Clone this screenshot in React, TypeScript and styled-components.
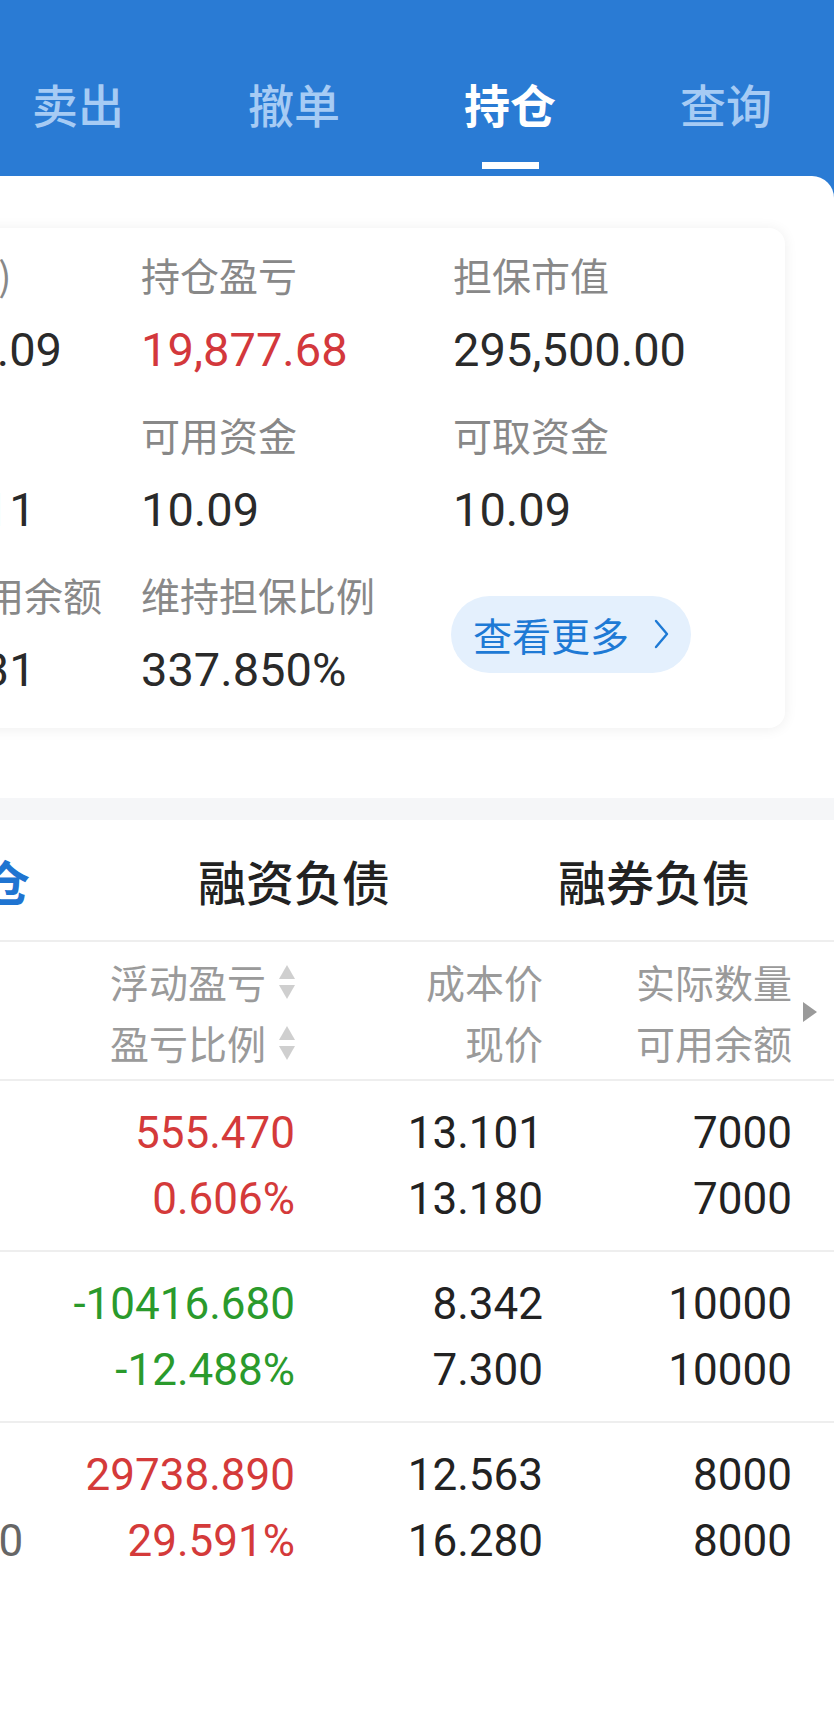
import styled, { createGlobalStyle } from "styled-components";

const GlobalStyle = createGlobalStyle`
  html, body {
    margin: 0;
    padding: 0;
    background: #ffffff;
  }
  body {
    font-family: Roboto, "Noto Sans CJK SC", sans-serif;
  }
`;

const CJK = `"Noto Sans CJK SC", "Noto Sans", sans-serif`;
const NUM = `Roboto, "Noto Sans CJK SC", sans-serif`;

const navTabs = ["买入", "卖出", "撤单", "持仓", "查询"];

const stats = [
  { label: "总资产(元)", value: "295,510.09" },
  { label: "持仓盈亏", value: "19,877.68", tone: "up" },
  { label: "担保市值", value: "295,500.00" },
  { label: "总负债", value: "87,466.11" },
  { label: "可用资金", value: "10.09" },
  { label: "可取资金", value: "10.09" },
  { label: "信用额可用余额", value: "58,033.31" },
  { label: "维持担保比例", value: "337.850%" },
];

const subTabs = ["担保持仓", "融资负债", "融券负债"];

type Tone = "up" | "down" | "flat";

const rows: {
  name: string;
  value: string;
  pl: string;
  ratio: string;
  cost: string;
  price: string;
  qty: string;
  avail: string;
  tone: Tone;
}[] = [
  { name: "招商银行", value: "92260.000", pl: "555.470", ratio: "0.606%", cost: "13.101", price: "13.180", qty: "7000", avail: "7000", tone: "up" },
  { name: "华夏银行", value: "73000.000", pl: "-10416.680", ratio: "-12.488%", cost: "8.342", price: "7.300", qty: "10000", avail: "10000", tone: "down" },
  { name: "中国平安", value: "130240.000", pl: "29738.890", ratio: "29.591%", cost: "12.563", price: "16.280", qty: "8000", avail: "8000", tone: "up" },
];

const toneColor = (t?: string) => (t === "up" ? "#d43a3a" : t === "down" ? "#2a9a2c" : "#222222");

const SortIcon = () => (
  <svg width="16" height="34" viewBox="0 0 16 34">
    <polygon points="8,0 16,14 0,14" fill="#cfcfcf" />
    <polygon points="0,20 16,20 8,34" fill="#cfcfcf" />
  </svg>
);

export default function App() {
  return (
    <>
      <GlobalStyle />
      <Viewport>
        <Screen>
          <Header>
            {navTabs.map((t) => (
              <NavTab key={t} $active={t === "持仓"}>
                {t}
              </NavTab>
            ))}
          </Header>

          <Panel>
            <Card>
              {stats.map((s) => (
                <Stat key={s.label}>
                  <StatLabel>{s.label}</StatLabel>
                  <StatValue $tone={s.tone}>{s.value}</StatValue>
                </Stat>
              ))}
              <MoreCell>
                <MoreButton>
                  查看更多
                  <svg width="15" height="30" viewBox="0 0 15 30">
                    <path d="M2 2 L13 15 L2 28" fill="none" stroke="#1e7ad5" strokeWidth="2.4" strokeLinecap="round" strokeLinejoin="round" />
                  </svg>
                </MoreButton>
              </MoreCell>
            </Card>

            <Band />

            <SubTabBar>
              {subTabs.map((t, i) => (
                <SubTab key={t} $active={i === 0}>
                  {t}
                </SubTab>
              ))}
            </SubTabBar>

            <TableHead>
              <NameCol />
              <HeadCell>
                <HeadLine>
                  浮动盈亏
                  <SortIcon />
                </HeadLine>
                <HeadLine>
                  盈亏比例
                  <SortIcon />
                </HeadLine>
              </HeadCell>
              <HeadCell>
                <HeadLine>成本价</HeadLine>
                <HeadLine>现价</HeadLine>
              </HeadCell>
              <HeadCell>
                <HeadLine>实际数量</HeadLine>
                <HeadLine>可用余额</HeadLine>
              </HeadCell>
              <MoreCol>
                <svg width="14" height="20" viewBox="0 0 14 20">
                  <polygon points="0,0 14,10 0,20" fill="#9a9a9a" />
                </svg>
              </MoreCol>
            </TableHead>

            {rows.map((r) => (
              <Row key={r.name}>
                <NameCol>
                  <NameText>{r.name}</NameText>
                  <NumLine $color="#666666">{r.value}</NumLine>
                </NameCol>
                <Cell>
                  <NumLine $color={toneColor(r.tone)}>{r.pl}</NumLine>
                  <NumLine $color={toneColor(r.tone)}>{r.ratio}</NumLine>
                </Cell>
                <Cell>
                  <NumLine>{r.cost}</NumLine>
                  <NumLine>{r.price}</NumLine>
                </Cell>
                <Cell>
                  <NumLine>{r.qty}</NumLine>
                  <NumLine>{r.avail}</NumLine>
                </Cell>
                <MoreCol />
              </Row>
            ))}
          </Panel>
        </Screen>
      </Viewport>
    </>
  );
}

const Viewport = styled.div`
  width: 834px;
  height: 1728px;
  overflow: hidden;
  display: flex;
  justify-content: flex-end;
  background: #2a7bd4;
`;

const Screen = styled.div`
  width: 1080px;
  flex-shrink: 0;
  min-height: 1728px;
  display: flex;
  flex-direction: column;
`;

const Header = styled.header`
  display: flex;
  height: 176px;
  padding-top: 73px;
  box-sizing: border-box;
`;

const NavTab = styled.div<{ $active?: boolean }>`
  flex: 1;
  display: flex;
  flex-direction: column;
  align-items: center;
  font-family: ${CJK};
  font-size: 46px;
  line-height: 60px;
  font-weight: ${(p) => (p.$active ? 700 : 500)};
  color: ${(p) => (p.$active ? "#ffffff" : "#a6cbf4")};

  &::after {
    content: "";
    width: 57px;
    height: 7px;
    margin-top: 29px;
    background: ${(p) => (p.$active ? "#ffffff" : "transparent")};
  }
`;

const Panel = styled.main`
  flex: 1;
  background: #ffffff;
  border-radius: 22px 22px 0 0;
  padding-top: 52px;
`;

const Card = styled.section`
  margin: 0 49px 70px;
  background: #ffffff;
  border-radius: 16px;
  box-shadow: 0 1px 14px rgba(0, 0, 0, 0.07);
  padding: 20px 0 28px 26px;
  display: grid;
  grid-template-columns: repeat(3, 312px);
  row-gap: 28px;
`;

const Stat = styled.div`
  display: flex;
  flex-direction: column;
  gap: 20px;
`;

const StatLabel = styled.div`
  font-family: ${CJK};
  font-size: 39px;
  line-height: 52px;
  color: #888888;
  white-space: nowrap;
`;

const StatValue = styled.div<{ $tone?: string }>`
  font-family: ${NUM};
  font-size: 47px;
  line-height: 60px;
  color: ${(p) => (p.$tone === "up" ? "#d3383c" : "#2a2a2a")};
  white-space: nowrap;
`;

const MoreCell = styled.div`
  display: flex;
  align-items: center;
  margin-left: -2px;
`;

const MoreButton = styled.div`
  display: inline-flex;
  align-items: center;
  gap: 25px;
  height: 77px;
  padding: 0 22px;
  border-radius: 39px;
  background: #e4f0fd;
  color: #1e7ad5;
  font-family: ${CJK};
  font-size: 39px;
`;

const Band = styled.div`
  height: 22px;
  background: #f5f6f8;
`;

const SubTabBar = styled.nav`
  display: flex;
  height: 120px;
  border-bottom: 2px solid #eeeeee;
`;

const SubTab = styled.div<{ $active?: boolean }>`
  flex: 1;
  display: flex;
  align-items: center;
  justify-content: center;
  font-family: ${CJK};
  font-size: 48px;
  font-weight: ${(p) => (p.$active ? 700 : 500)};
  color: ${(p) => (p.$active ? "#1f74d1" : "#222222")};
`;

const tableCols = `grid-template-columns: 293px 248px 248px 249px 42px;`;

const TableHead = styled.div`
  display: grid;
  ${tableCols}
  padding: 9px 0 6px;
  border-bottom: 2px solid #eeeeee;
`;

const HeadCell = styled.div`
  display: flex;
  flex-direction: column;
  align-items: flex-end;
`;

const HeadLine = styled.div`
  display: flex;
  align-items: center;
  gap: 13px;
  font-family: ${CJK};
  font-size: 39px;
  line-height: 61px;
  color: #9a9a9a;
`;

const MoreCol = styled.div`
  display: flex;
  align-items: center;
  padding-left: 11px;
`;

const Row = styled.div`
  display: grid;
  ${tableCols}
  padding: 22px 0 21px;
  border-bottom: 2px solid #eeeeee;

  &:last-child {
    border-bottom: none;
  }
`;

const NameCol = styled.div`
  display: flex;
  flex-direction: column;
  gap: 6px;
  padding-left: 35px;
  overflow: hidden;
`;

const NameText = styled.div`
  font-family: ${CJK};
  font-size: 42px;
  line-height: 60px;
  color: #222222;
`;

const Cell = styled.div`
  display: flex;
  flex-direction: column;
  align-items: flex-end;
  gap: 6px;
`;

const NumLine = styled.div<{ $color?: string }>`
  font-family: ${NUM};
  font-size: 44px;
  line-height: 60px;
  color: ${(p) => p.$color ?? "#222222"};
  white-space: nowrap;
`;
